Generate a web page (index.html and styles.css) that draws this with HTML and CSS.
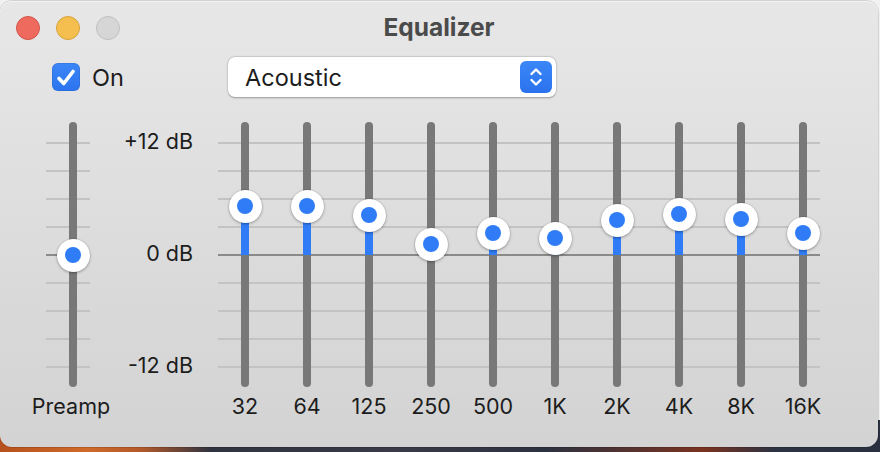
FILE: index.html
```html
<!DOCTYPE html>
<html>
<head>
<meta charset="utf-8">
<link rel="stylesheet" href="styles.css">
</head>
<body>
<div class="window">
  <div class="titlebar">
    <div class="lights">
      <span class="light red"></span>
      <span class="light yellow"></span>
      <span class="light gray"></span>
    </div>
    <div class="title">Equalizer</div>
    <div class="spacer"></div>
  </div>
  <div class="controls">
    <label class="check">
      <span class="box"><svg viewBox="0 0 28 28" width="28" height="28"><path d="M7 15.5 L11.8 20.5 L21 8.5" fill="none" stroke="#fff" stroke-width="3.6" stroke-linecap="round" stroke-linejoin="round"/></svg></span>
      <span class="check-label">On</span>
    </label>
    <div class="select">
      <span class="select-text">Acoustic</span>
      <span class="stepper"><svg viewBox="0 0 32 32" width="32" height="32"><path d="M11.5 13 L16 8.5 L20.5 13" fill="none" stroke="#fff" stroke-width="2.4" stroke-linecap="round" stroke-linejoin="round"/><path d="M11.5 19 L16 23.5 L20.5 19" fill="none" stroke="#fff" stroke-width="2.4" stroke-linecap="round" stroke-linejoin="round"/></svg></span>
    </div>
  </div>
  <div class="eq">
    <div class="col preamp">
      <div class="slider ticks-pre">
        <div class="track">
          <div class="knob" style="top:133px"><span class="dot"></span></div>
        </div>
      </div>
      <div class="label">Preamp</div>
    </div>
    <div class="scale">
      <div class="scale-label">+12 dB</div>
      <div class="scale-label">0 dB</div>
      <div class="scale-label">-12 dB</div>
    </div>
    <div class="bands">
      <div class="col band"><div class="slider"><div class="track"><div class="fill" style="top:84px;height:49px"></div><div class="knob" style="top:84px"><span class="dot"></span></div></div></div><div class="label">32</div></div>
      <div class="col band"><div class="slider"><div class="track"><div class="fill" style="top:84px;height:49px"></div><div class="knob" style="top:84px"><span class="dot"></span></div></div></div><div class="label">64</div></div>
      <div class="col band"><div class="slider"><div class="track"><div class="fill" style="top:93px;height:40px"></div><div class="knob" style="top:93px"><span class="dot"></span></div></div></div><div class="label">125</div></div>
      <div class="col band"><div class="slider"><div class="track"><div class="fill" style="top:122px;height:11px"></div><div class="knob" style="top:122px"><span class="dot"></span></div></div></div><div class="label">250</div></div>
      <div class="col band"><div class="slider"><div class="track"><div class="fill" style="top:111px;height:22px"></div><div class="knob" style="top:111px"><span class="dot"></span></div></div></div><div class="label">500</div></div>
      <div class="col band"><div class="slider"><div class="track"><div class="fill" style="top:116px;height:17px"></div><div class="knob" style="top:116px"><span class="dot"></span></div></div></div><div class="label">1K</div></div>
      <div class="col band"><div class="slider"><div class="track"><div class="fill" style="top:98px;height:35px"></div><div class="knob" style="top:98px"><span class="dot"></span></div></div></div><div class="label">2K</div></div>
      <div class="col band"><div class="slider"><div class="track"><div class="fill" style="top:92px;height:41px"></div><div class="knob" style="top:92px"><span class="dot"></span></div></div></div><div class="label">4K</div></div>
      <div class="col band"><div class="slider"><div class="track"><div class="fill" style="top:97px;height:36px"></div><div class="knob" style="top:97px"><span class="dot"></span></div></div></div><div class="label">8K</div></div>
      <div class="col band"><div class="slider"><div class="track"><div class="fill" style="top:111px;height:22px"></div><div class="knob" style="top:111px"><span class="dot"></span></div></div></div><div class="label">16K</div></div>
    </div>
  </div>
</div>
</body>
</html>
```

FILE: styles.css
```css
html, body {
  margin: 0;
  padding: 0;
}
body {
  width: 880px;
  height: 452px;
  overflow: hidden;
  font-family: "Inter", "Liberation Sans", sans-serif;
  color: #1c1c1c;
  background:
    linear-gradient(#f1f1f1, #f1f1f1) top left / 100% 420px no-repeat,
    linear-gradient(to right, #b8521d 0, #cf6a2a 10%, #b35a2a 16%, #2f3340 24%, #3a3a48 45%, #2d3240 62%, #7a3320 80%, #2c3342 88%, #2a3040 100%);
}
.window {
  box-sizing: border-box;
  width: 878px;
  height: 446px;
  margin-top: 1px;
  border-radius: 12px;
  background: linear-gradient(to bottom, #e7e7e7 0, #e2e2e2 120px, #d9d9d9 300px, #d3d3d3 100%);
  box-shadow: 0 0 0 1px rgba(0, 0, 0, 0.12), inset 0 1px 0 rgba(255, 255, 255, 0.5);
  display: flex;
  flex-direction: column;
}
.titlebar {
  height: 54px;
  display: grid;
  grid-template-columns: 1fr auto 1fr;
  align-items: center;
  padding: 0 16px;
}
.lights {
  display: flex;
  gap: 16px;
  align-items: center;
}
.light {
  box-sizing: border-box;
  width: 24px;
  height: 24px;
  border-radius: 50%;
  display: block;
}
.light.red { background: #ee6a5e; border: 1px solid #d35548; }
.light.yellow { background: #f5bf4f; border: 1px solid #d9a13a; }
.light.gray { background: #d6d6d6; border: 1px solid #bfbfbf; }
.title {
  font-size: 24.5px;
  font-weight: 700;
  color: #4b4b4b;
  line-height: 28px;
  margin-top: -2px;
}
.controls {
  height: 44px;
  display: flex;
  align-items: center;
  padding-left: 52px;
}
.check {
  display: flex;
  align-items: center;
  gap: 12px;
  width: 176px;
}
.box {
  width: 28px;
  height: 28px;
  border-radius: 6px;
  background: linear-gradient(#3b86f7, #2c74ee);
  box-shadow: inset 0 0 0 0.5px rgba(0, 0, 0, 0.15);
  display: block;
}
.box svg { display: block; }
.check-label {
  font-size: 23.5px;
}
.select {
  box-sizing: border-box;
  width: 328px;
  height: 40px;
  background: #fff;
  border-radius: 7px;
  box-shadow: 0 0.5px 2px rgba(0, 0, 0, 0.3), 0 0 0 0.5px rgba(0, 0, 0, 0.08);
  display: flex;
  align-items: center;
  justify-content: space-between;
  padding: 0 4px 0 17px;
}
.select-text {
  font-size: 23.5px;
}
.stepper {
  width: 32px;
  height: 32px;
  border-radius: 6px;
  background: linear-gradient(#3b87f8, #2a72ed);
  display: block;
}
.stepper svg { display: block; }
.eq {
  margin-top: 23px;
  display: flex;
  padding-left: 46px;
}
.col {
  display: flex;
  flex-direction: column;
  align-items: center;
}
.preamp {
  width: 50px;
  align-items: flex-start;
}
.slider {
  position: relative;
  height: 265px;
  width: 56px;
}
.ticks-pre {
  width: 44px;
  background:
    linear-gradient(#8a8a8a, #8a8a8a) 0 132px / 100% 2px no-repeat,
    repeating-linear-gradient(to bottom, transparent 0, transparent 20px, #c3c3c3 20px, #c3c3c3 22px, transparent 22px, transparent 28px);
}
.preamp .track {
  margin-left: 23px;
}
.preamp .label {
  align-self: center;
}
.track {
  position: relative;
  width: 8px;
  height: 265px;
  border-radius: 4px;
  background: #787878;
  margin: 0 auto;
}
.fill {
  position: absolute;
  left: 0;
  width: 8px;
  background: #2f7cf6;
}
.knob {
  position: absolute;
  left: 4px;
  width: 33px;
  height: 33px;
  margin: -16.5px 0 0 -16.5px;
  border-radius: 50%;
  background: #fff;
  box-shadow: 0 1px 3px rgba(0, 0, 0, 0.32), 0 0 0 0.5px rgba(0, 0, 0, 0.08);
  display: flex;
  align-items: center;
  justify-content: center;
}
.dot {
  width: 16px;
  height: 16px;
  border-radius: 50%;
  background: #2f7cf6;
  display: block;
}
.label {
  margin-top: 7px;
  font-size: 21.5px;
  line-height: 24px;
  white-space: nowrap;
}
.scale {
  width: 97px;
  margin-right: 24px;
  height: 265px;
  box-sizing: border-box;
  padding-top: 7px;
  display: flex;
  flex-direction: column;
  align-items: flex-end;
  gap: 88px;
}
.scale-label {
  font-size: 21.5px;
  line-height: 24px;
  white-space: nowrap;
}
.bands {
  display: flex;
  gap: 6px;
  align-self: flex-start;
  background:
    linear-gradient(#8a8a8a, #8a8a8a) 1px 132px / 602px 2px no-repeat,
    repeating-linear-gradient(to bottom, transparent 0, transparent 20px, #c3c3c3 20px, #c3c3c3 22px, transparent 22px, transparent 28px) 1px 0 / 602px 265px no-repeat;
}
```
